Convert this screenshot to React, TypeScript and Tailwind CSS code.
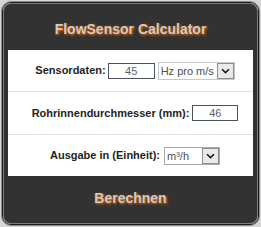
import React from "react";

const font = { fontFamily: '"Liberation Sans", Arial, sans-serif' };

function Chevron() {
  return (
    <svg width="9" height="6" viewBox="0 0 9 6" className="block">
      <path d="M1 1.2 L4.5 4.6 L8 1.2" fill="none" stroke="#1a1a1a" strokeWidth="1.6" />
    </svg>
  );
}

function Select({ value, width, muted }: { value: string; width: string; muted?: boolean }) {
  return (
    <div
      className={`flex items-center h-[18px] bg-white border ${muted ? "border-[#c8c8c8]" : "border-[#a9a9a9]"} ${width}`}
    >
      <span className="flex-1 pl-[2px] text-[11px] leading-[14px] text-[#4a4f58] whitespace-nowrap overflow-hidden self-start pt-[1px]">
        {value}
      </span>
      <span className="flex items-center justify-center w-[17px] h-[16px] border border-[#8e8e8e] bg-[#e9e9e9]">
        <Chevron />
      </span>
    </div>
  );
}

function Input({ value, width }: { value: string; width: string }) {
  return (
    <div
      className={`h-[16px] bg-white border border-[#4b5260] text-center text-[11px] leading-[14px] font-normal text-[#5b6270] ${width}`}
    >
      {value}
    </div>
  );
}

export default function App() {
  return (
    <div className="w-[261px] h-[227px] bg-[#d6d6d6] p-[1px]" style={font}>
      <div className="h-full rounded-[10px] border border-[#8c8c8c]">
        <div className="h-full rounded-[9px] border border-[#1c1c1c]">
          <div className="h-full rounded-[8px] border border-[#7a7a7a] bg-[#323232] px-[4px] flex flex-col">
            {/* Header */}
            <div className="h-[46px] pt-[17px] text-center text-[14px] leading-[16px] font-bold text-[#cdcdcd] [text-shadow:1px_1px_3px_#d0600c,1px_1px_2px_#9a4300]">
              FlowSensor Calculator
            </div>

            {/* Form */}
            <div className="bg-white flex flex-col text-[11px] font-bold text-[#1e1e1e]">
              <div className="h-[42px] border-b border-[#e2e2e2] flex items-center justify-center pl-[9px]">
                <span>Sensordaten:</span>
                <div className="ml-[2px]">
                  <Input value="45" width="w-[47px]" />
                </div>
                <div className="ml-[3px] font-normal">
                  <Select value="Hz pro m/s" width="w-[77px]" muted />
                </div>
              </div>
              <div className="h-[43px] border-b border-[#e2e2e2] flex items-center justify-center pl-[9px]">
                <span>Rohrinnendurchmesser (mm):</span>
                <div className="ml-[3px]">
                  <Input value="46" width="w-[46px]" />
                </div>
              </div>
              <div className="h-[41px] flex items-center justify-center pl-[9px]">
                <span>Ausgabe in (Einheit):</span>
                <div className="ml-[4px] font-normal">
                  <Select value="m³/h" width="w-[56px]" />
                </div>
              </div>
            </div>

            {/* Footer */}
            <div className="flex-1 pt-[14px] text-center text-[14px] leading-[16px] font-bold text-[#cdcdcd] [text-shadow:1px_1px_3px_#d0600c,1px_1px_2px_#9a4300]">
              Berechnen
            </div>
          </div>
        </div>
      </div>
    </div>
  );
}
